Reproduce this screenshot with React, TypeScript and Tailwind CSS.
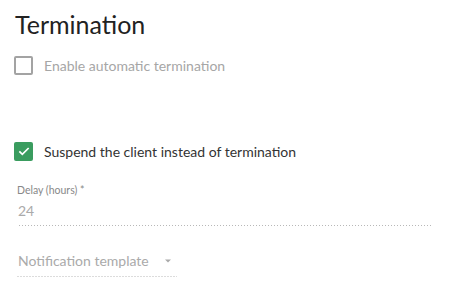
import React from 'react';

const dotted =
  'bg-[linear-gradient(to_right,rgba(0,0,0,0.28)_33%,transparent_0%)] bg-[length:3px_1px] bg-repeat-x bg-bottom';

function Checkbox({ checked, label }: { checked: boolean; label: string }) {
  return (
    <label className="flex items-center h-[20px]">
      {checked ? (
        <span className="flex items-center justify-center w-[19px] h-[19px] rounded-[2px] bg-[#3a9c5f]">
          <svg viewBox="0 0 24 24" className="w-[16px] h-[16px]" fill="none" stroke="#fff" strokeWidth="2.6">
            <path d="M5 12.5l4.5 4.5L19 7.5" />
          </svg>
        </span>
      ) : (
        <span className="block w-[19px] h-[19px] rounded-[2px] border-2 border-[#a3a3a3]" />
      )}
      <span className={`ml-[11px] text-[14px] ${checked ? 'text-[#333]' : 'text-[#a6a6a6]'}`}>{label}</span>
    </label>
  );
}

export default function App() {
  return (
    <div className="w-[465px] h-[295px] bg-white pl-[14px] pt-[8px] font-['Lato',sans-serif]">
      <h2 className="text-[25px] leading-[32px] text-[#222] font-normal ml-[1px]">Termination</h2>
      <div className="mt-[15px]">
        <Checkbox checked={false} label="Enable automatic termination" />
      </div>
      <div className="mt-[66px]">
        <Checkbox checked label="Suspend the client instead of termination" />
      </div>
      <div className={`mt-[22px] ml-[3px] w-[415px] pb-[6px] ${dotted}`}>
        <div className="text-[10.5px] leading-[14px] text-[#888]">Delay (hours) *</div>
        <div className="mt-[5px] text-[14px] leading-[18px] text-[#aaa] ml-[1px]">24</div>
      </div>
      <div className={`mt-[26px] ml-[3px] w-[160px] pb-[7px] flex items-center ${dotted}`}>
        <span className="text-[14px] leading-[18px] text-[#aaa] ml-[1px]">Notification template</span>
        <svg viewBox="0 0 24 24" className="w-[18px] h-[18px] ml-auto" fill="#aaa">
          <path d="M8 10l4 4 4-4z" />
        </svg>
      </div>
    </div>
  );
}
